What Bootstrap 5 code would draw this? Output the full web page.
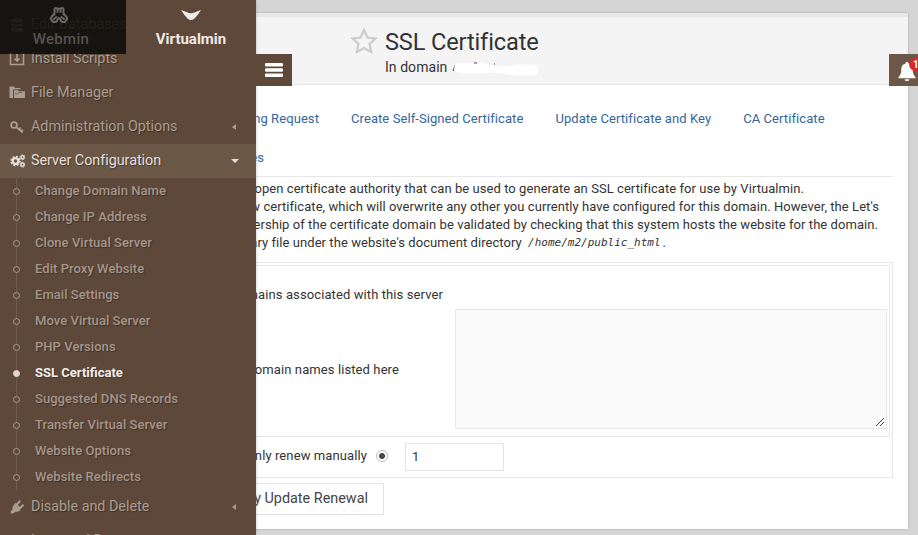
<!DOCTYPE html>
<html lang="en">
<head>
<meta charset="utf-8">
<meta name="viewport" content="width=device-width, initial-scale=1">
<title>SSL Certificate</title>
<link href="https://cdn.jsdelivr.net/npm/bootstrap@5.3.0/dist/css/bootstrap.min.css" rel="stylesheet">
<style>
body{font-family:Roboto,"Liberation Sans",sans-serif;font-size:13px;line-height:18px;letter-spacing:.06px;color:#333;background:#d5d5d5;height:535px;overflow:hidden}
/* sidebar */
.side{width:256px;height:535px;background:#5d4839;color:#aa9d92;z-index:5;box-shadow:0 0 3px rgba(0,0,0,.25)}
.side-tabs{height:54px;z-index:2}
.side-tab{font-size:15px;font-weight:500;line-height:18px;padding-top:6px}
.tab-web{width:126px;background:rgba(13,12,10,.88);color:#565350;letter-spacing:.3px;padding-right:4px}
.tab-web svg{margin-left:-5px}
.tab-vir{width:130px;background:#5d4839;color:#eeeae6;font-weight:700;letter-spacing:0}
.tab-vir svg{margin-top:-1px;margin-bottom:1px}
.side-menu{padding-top:8px;letter-spacing:0}
.side-item{height:34px;padding-left:9px;font-size:14.4px;letter-spacing:-.04px;text-shadow:1px 1px 1px rgba(0,0,0,.35)}
.side-item svg{width:16px;height:16px;margin-right:6px;flex:none}
.side-item.open{background:#6c5847;color:#e5dfda}
.caret-l,.caret-d{margin-left:auto;width:0;height:0}
.caret-l{border:3.5px solid transparent;border-right:4px solid #aa9d92;border-left:0;margin-right:20px}
.caret-d{border:4px solid transparent;border-top:4px solid #e5dfda;border-bottom:0;margin-right:17px}
.side-sub{background:linear-gradient(#705c4c,#705c4c) 16px 0/1px 100% no-repeat}
.sub-item{height:26px;padding-left:13px;font-size:13px;letter-spacing:.05px;font-weight:500;text-shadow:1px 1px 1px rgba(0,0,0,.3);color:#a4968b}
.sub-item i{width:7px;height:7px;border:1.5px solid #a99c91;border-radius:50%;background:#5d4839;margin-right:15px}
.sub-item.on{color:#f1eeeb;font-weight:700;letter-spacing:0}
.sub-item.on i{background:#ddd7d2;border-color:#ddd7d2}
/* main panel */
.page{width:652px;height:516px;margin-top:13px;background:#fff;box-shadow:0 0 2px rgba(0,0,0,.25)}
.page-head{height:72px;background:#f4f4f4;border-top:4px solid #e8e8e8;border-bottom:1px solid #e4e4e4;padding-left:94px}
.page-star{margin-top:8px}
.page-title{font-size:23.6px;line-height:28px;letter-spacing:-.15px;font-weight:400;margin-top:3px}
.page-sub{font-size:14px;line-height:22px;letter-spacing:.05px}
.page-text{padding:8px 0 0 7px}
.tabs-line{height:39px;color:#35659b;letter-spacing:.08px}
.clip{display:flex;justify-content:flex-end;overflow:hidden;white-space:nowrap}
.w-req{width:63px}.w-es{width:8px}
.tabs-wrap{height:92px;padding-top:14px;border-bottom:1px solid #e8e8e8;margin-right:15px}
.intro{padding-top:3px}
.l1{width:548px}.l2{width:623px}.l3{width:622px}.l4{width:410px}
.path{font:italic 11px "DejaVu Sans Mono",monospace;letter-spacing:0;line-height:18px;margin:0 2px 0 3px}
.outer{border:1px solid #e8e8e8;border-left:0;height:216px;margin:10px 15px 0 0;padding-top:2px}
.inner{border:1px solid #e8e8e8;border-left:0;height:172px;margin-right:2px}
.row-a{height:38px}
.row-b{height:130px;padding-right:2px}
.row-b .clip{margin-top:2px}
.row-c{height:40px}
.row-c .clip{margin-top:-2px}
.w-assoc{width:187px}.w-list{width:143px}.w-man{width:111px}.w-btn{width:112px}
.outer .clip{letter-spacing:.1px}
.area{width:432px;height:120px;border:1px solid #e8e8e8;background:#fafafa}
.dot{width:12px;height:12px;margin:-3px 0 0 9px;border:1px solid #bbb;border-radius:50%;background:radial-gradient(#4a4a4a 0 2.6px,#fff 3.4px)}
.num{width:99px;height:28px;border:1px solid #e4e4e4;margin-left:17px;padding:0 0 1px 6px}
.renew{width:128px;height:32px;border:1px solid #e2e2e2;border-left:0;margin-top:5px;font-size:14.4px;letter-spacing:0;color:#444}
.toggle{left:256px;top:54px;width:36px;height:32px;background:#5d4839;z-index:6}
.bell{right:0;top:54px;width:29px;height:32px;background:#6c5848;z-index:6;overflow:hidden}
.bell-n{right:-5px;top:4px;width:14px;height:13px;border-radius:7px;background:#d92b2b;color:#fff;font-size:10px;font-weight:700;line-height:13px;padding-left:4px}
</style>
<script src="https://cdn.jsdelivr.net/npm/bootstrap@5.3.0/dist/js/bootstrap.bundle.min.js"></script>
</head>
<body class="d-flex position-relative">
<aside class="side position-relative overflow-hidden flex-shrink-0">
  <div class="side-tabs d-flex position-absolute top-0 start-0">
    <div class="side-tab tab-web d-flex flex-column align-items-center">
      <svg width="20" height="20" viewBox="0 0 20 20" fill="none" stroke="#696663" stroke-width="2" stroke-linejoin="round" stroke-linecap="round"><path d="M5.500 8.500V3.500Q5.500 2 7 2Q8.500 2 8.500 4V6M11.500 6V4Q11.500 2 13 2Q14.500 2 14.500 3.500V8.500M8.500 3.500Q10 1.500 11.500 3.500M5.500 7.500 2.500 11Q1 13.500 3 14Q3.500 16.500 6 16Q8 16 8.500 13.500M14.500 7.500l3 3.500Q19 13.500 17 14Q16.500 16.500 14 16Q12 16 11.500 13.500M5 13l2.500-2M15 13l-2.500-2M8.500 13.500 10 12l1.500 1.500"/></svg>
      <span class="mt-1">Webmin</span>
    </div>
    <div class="side-tab tab-vir d-flex flex-column align-items-center">
      <svg width="20" height="20" viewBox="0 0 20 20"><path d="M0 5 6 7.200Q10 9.200 14 7.200L20 5Q17 10 13.500 13.500Q10 16.500 6.500 13.500Q3 10 0 5Z" fill="#eeeae6"/></svg>
      <span class="mt-1">Virtualmin</span>
    </div>
  </div>
  <nav class="side-menu">
    <div class="side-item d-flex align-items-center"><svg viewBox="0 0 16 16" fill="currentColor"><path d="M2 3c0-2.500 12-2.500 12 0v1c0 2-12 2-12 0zM2 6c2 1.500 10 1.500 12 0v2c0 2-12 2-12 0zM2 10c2 1.500 10 1.500 12 0v3c0 2.500-12 2.500-12 0z"/></svg>Edit Databases</div>
    <div class="side-item d-flex align-items-center"><svg viewBox="0 0 16 16" fill="none" stroke="currentColor" stroke-width="1.600"><path d="M5 2H1.500v11.500h13V2H11M8 2v8M5.500 7.500 8 10l2.500-2.500"/></svg>Install Scripts</div>
    <div class="side-item d-flex align-items-center"><svg viewBox="0 0 16 16" fill="currentColor"><path d="M.5 1.500H5l1 1.500h5.500v1.500H5L4 5.500V13H.5z"/><path d="M5 5h4l1 1.200h6V13H5z"/><path d="M4.500 13.500V4.800H12M6 8.800h2.500L10 7.500h3" fill="none" stroke="#5d4839" stroke-width=".7"/></svg>File Manager</div>
    <div class="side-item d-flex align-items-center"><svg viewBox="0 0 16 16" fill="none" stroke="currentColor" stroke-width="1.700"><circle cx="5" cy="6" r="2.900"/><path d="m7.300 8 6.500 5.500M11.700 8.500 9.800 10.500M13.900 10.500l-2 2.300"/></svg>Administration Options<span class="caret-l"></span></div>
    <div class="side-item open d-flex align-items-center"><svg viewBox="0 0 16 16" fill="none" stroke="currentColor"><circle cx="6.500" cy="8" r="2.900" stroke-width="2.400"/><circle cx="6.500" cy="8" r="4.600" stroke-width="1.300" stroke-dasharray="2 1.610"/><circle cx="13.500" cy="4.300" r="1.600" stroke-width="1.500"/><circle cx="13.500" cy="4.300" r="2.500" stroke-width="1" stroke-dasharray="1.200 1.400"/><circle cx="13.500" cy="11.700" r="1.600" stroke-width="1.500"/><circle cx="13.500" cy="11.700" r="2.500" stroke-width="1" stroke-dasharray="1.200 1.400"/></svg>Server Configuration<span class="caret-d"></span></div>
    <div class="side-sub">
      <div class="sub-item d-flex align-items-center"><i></i>Change Domain Name</div>
      <div class="sub-item d-flex align-items-center"><i></i>Change IP Address</div>
      <div class="sub-item d-flex align-items-center"><i></i>Clone Virtual Server</div>
      <div class="sub-item d-flex align-items-center"><i></i>Edit Proxy Website</div>
      <div class="sub-item d-flex align-items-center"><i></i>Email Settings</div>
      <div class="sub-item d-flex align-items-center"><i></i>Move Virtual Server</div>
      <div class="sub-item d-flex align-items-center"><i></i>PHP Versions</div>
      <div class="sub-item on d-flex align-items-center"><i></i>SSL Certificate</div>
      <div class="sub-item d-flex align-items-center"><i></i>Suggested DNS Records</div>
      <div class="sub-item d-flex align-items-center"><i></i>Transfer Virtual Server</div>
      <div class="sub-item d-flex align-items-center"><i></i>Website Options</div>
      <div class="sub-item d-flex align-items-center"><i></i>Website Redirects</div>
    </div>
    <div class="side-item d-flex align-items-center"><svg viewBox="0 0 16 16" fill="currentColor"><path d="M1.500 14.500c.2-2.500 1-3.300 2.200-4C3.200 8.200 4 6.500 5.500 5.200l6 5.800c-1.500 1.500-3.200 2.200-5.200 1.700C5.300 14.100 4 14.500 1.500 14.500z"/><path d="M6 4.500l5.700 5.700" stroke="currentColor" stroke-width="1.800"/><path d="m7.800 5.500 2.900-3.200M11 9l3-2.800" stroke="currentColor" stroke-width="2" stroke-linecap="round"/></svg>Disable and Delete<span class="caret-l"></span></div>
    <div class="side-item d-flex align-items-center"><svg viewBox="0 0 16 16" fill="currentColor"><path d="M2 2h8l3 3v10H2z"/></svg>Logs and Reports</div>
  </nav>
</aside>
<main class="page">
  <header class="page-head d-flex">
    <svg class="page-star flex-shrink-0" width="28" height="32" viewBox="0 0 28 28" fill="none" stroke="#ccc" stroke-width="2.200"><path d="m14 3 3.400 7.600 8.200.9-6.100 5.500 1.700 8.100L14 21l-7.200 4.100L8.500 17 2.400 11.500l8.200-.9z"/></svg>
    <div class="page-text">
      <div class="page-title">SSL Certificate</div>
      <div class="page-sub d-flex align-items-center"><span>In domain</span>
        <svg width="94" height="18" viewBox="0 0 94 18"><path d="m5.500 13 2-6h1.500l-2 6z" fill="#666"/><path d="M8 5.500h28l8 2 8 1h10l8-2h16c4 0 5 1 5 5s-1 6-5 6H65l-8-2-12-1-12 1H14l-7-3z" fill="#fff"/><path d="M27 5h3M47 6h1" stroke="#627"/></svg>
      </div>
    </div>
  </header>
  <div class="tabs-wrap">
    <div class="tabs-line d-flex align-items-center"><span class="clip w-req me-4">Certificate Signing Request</span><span class="ms-2">Create Self-Signed Certificate</span><span class="ms-4 ps-2">Update Certificate and Key</span><span class="ms-4 ps-2">CA Certificate</span></div>
    <div class="tabs-line d-flex align-items-center"><span class="clip w-es">Services</span></div>
  </div>
  <div class="intro">
    <div class="clip l1">Let's Encrypt is a free, automated, and open certificate authority that can be used to generate an SSL certificate for use by Virtualmin.</div>
    <div class="clip l2">request a new certificate, which will overwrite any other you currently have configured for this domain. However, the Let's</div>
    <div class="clip l3">Encrypt service requires that your ownership of the certificate domain be validated by checking that this system hosts the website for the domain.</div>
    <div class="clip l4"><span>a temporary file under the website's document directory&nbsp;</span> <span class="path">/home/m2/public_html</span>.</div>
  </div>
  <section class="outer">
    <div class="inner">
      <div class="row-a d-flex align-items-end"><span class="clip w-assoc">Domains associated with this server</span></div>
      <div class="row-b d-flex align-items-center justify-content-between"><span class="clip w-list">Domain names listed here</span><div class="area position-relative"><svg class="position-absolute bottom-0 end-0" width="11" height="11" viewBox="0 0 11 11" stroke="#444"><path d="m1 9 8-8M5 9l4-4"/></svg></div></div>
    </div>
    <div class="row-c d-flex align-items-center"><span class="clip w-man">Only renew manually</span><span class="dot"></span><span class="num d-flex align-items-center">1</span></div>
  </section>
  <div class="renew d-flex align-items-center"><span class="clip w-btn">Only Update Renewal</span></div>
</main>
<div class="toggle position-absolute d-flex align-items-center justify-content-center"><svg width="18" height="14" viewBox="0 0 18 14" fill="#fff"><rect width="18" height="3.600" rx="1"/><rect y="5.200" width="18" height="3.600" rx="1"/><rect y="10.400" width="18" height="3.600" rx="1"/></svg></div>
<div class="bell position-absolute"><svg class="mt-1 ms-2 pt-1" width="20" height="24" viewBox="0 0 20 21" fill="#fff"><path d="M10 0c1 0 1.500.6 1.500 1.500C15 2.500 16 5 16 8c0 4 1 6 3 8v1H1v-1c2-2 3-4 3-8 0-3 1-5.500 4.500-6.500C8.500.6 9 0 10 0zM7.500 18h5a2.500 2 0 0 1-5 0z"/></svg><span class="bell-n position-absolute">1</span></div>
</body>
</html>
